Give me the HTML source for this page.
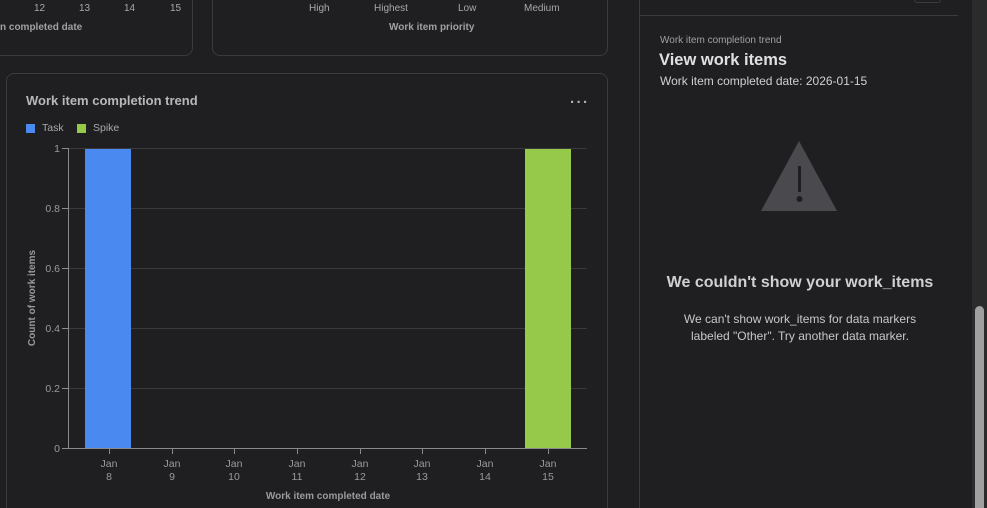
<!DOCTYPE html>
<html style="margin:0;width:987px;height:508px;overflow:hidden"><head><meta charset="utf-8"><style>
body{margin:0;width:987px;height:508px;overflow:hidden;background:#1f1f21;font-family:"Liberation Sans",sans-serif;position:relative}
.abs{position:absolute}
.card{position:absolute;border:1px solid #3b3b3e;border-radius:8px;box-sizing:border-box}
.t{position:absolute;color:#a8a8aa;font-size:10px;white-space:nowrap}
</style></head><body>
<div class="card" style="left:-20px;top:-20px;width:213px;height:76px"></div>
<div class="card" style="left:212px;top:-20px;width:396px;height:76px"></div>
<div class="t" style="left:34px;top:3px">12</div>
<div class="t" style="left:79px;top:3px">13</div>
<div class="t" style="left:124px;top:3px">14</div>
<div class="t" style="left:170px;top:3px">15</div>
<div class="t" style="left:0;top:22px;font-weight:bold;font-size:10px;color:#a0a0a2">n completed date</div>
<div class="t" style="left:309px;top:3px">High</div>
<div class="t" style="left:374px;top:3px">Highest</div>
<div class="t" style="left:458px;top:3px">Low</div>
<div class="t" style="left:524px;top:3px">Medium</div>
<div class="t" style="left:389px;top:22px;font-weight:bold;font-size:10px;color:#a0a0a2">Work item priority</div>

<div class="card" style="left:6px;top:73px;width:602px;height:445px"></div>
<div class="t" style="left:26px;top:93px;font-size:13px;font-weight:bold;color:#b8b8ba">Work item completion trend</div>
<div class="t" style="left:570px;top:94px;font-size:15px;font-weight:bold;color:#b0b0b2;letter-spacing:1.5px">···</div>
<div class="abs" style="left:26px;top:124px;width:9px;height:9px;background:#4a8af0"></div>
<div class="t" style="left:42px;top:122px;font-size:10.5px">Task</div>
<div class="abs" style="left:77px;top:124px;width:9px;height:9px;background:#96c84a"></div>
<div class="t" style="left:93px;top:122px;font-size:10.5px">Spike</div>

<svg class="abs" style="left:0;top:0" width="640" height="508">
<g stroke="#3a3a3d" stroke-width="1">
<line x1="69" y1="148.5" x2="587" y2="148.5"/><line x1="69" y1="208.5" x2="587" y2="208.5"/>
<line x1="69" y1="268.5" x2="587" y2="268.5"/><line x1="69" y1="328.5" x2="587" y2="328.5"/>
<line x1="69" y1="388.5" x2="587" y2="388.5"/></g>
<rect x="85" y="149" width="46" height="299" fill="#4a8af0"/>
<rect x="525" y="149" width="46" height="299" fill="#96c84a"/>
<g stroke="#8a8a8c" stroke-width="1">
<line x1="68.5" y1="148" x2="68.5" y2="448"/><line x1="62" y1="448.5" x2="587" y2="448.5"/>
<line x1="62" y1="148.5" x2="68" y2="148.5"/><line x1="62" y1="208.5" x2="68" y2="208.5"/>
<line x1="62" y1="268.5" x2="68" y2="268.5"/><line x1="62" y1="328.5" x2="68" y2="328.5"/>
<line x1="62" y1="388.5" x2="68" y2="388.5"/>
<line x1="109.5" y1="448" x2="109.5" y2="454"/><line x1="172.5" y1="448" x2="172.5" y2="454"/>
<line x1="234.5" y1="448" x2="234.5" y2="454"/><line x1="297.5" y1="448" x2="297.5" y2="454"/>
<line x1="360.5" y1="448" x2="360.5" y2="454"/><line x1="422.5" y1="448" x2="422.5" y2="454"/>
<line x1="485.5" y1="448" x2="485.5" y2="454"/><line x1="548.5" y1="448" x2="548.5" y2="454"/>
</g>
<g fill="#9a9a9c" font-family="Liberation Sans" font-size="10.5" text-anchor="end">
<text x="60" y="152">1</text><text x="60" y="212">0.8</text><text x="60" y="272">0.6</text>
<text x="60" y="332">0.4</text><text x="60" y="392">0.2</text><text x="60" y="452">0</text></g>
<g fill="#9a9a9c" font-family="Liberation Sans" font-size="10.5" text-anchor="middle">
<text x="109" y="467">Jan</text><text x="109" y="480">8</text>
<text x="172" y="467">Jan</text><text x="172" y="480">9</text>
<text x="234" y="467">Jan</text><text x="234" y="480">10</text>
<text x="297" y="467">Jan</text><text x="297" y="480">11</text>
<text x="360" y="467">Jan</text><text x="360" y="480">12</text>
<text x="422" y="467">Jan</text><text x="422" y="480">13</text>
<text x="485" y="467">Jan</text><text x="485" y="480">14</text>
<text x="548" y="467">Jan</text><text x="548" y="480">15</text>
<text x="328" y="499" font-weight="bold" font-size="10">Work item completed date</text>
<text transform="translate(35,298) rotate(-90)" font-weight="bold" font-size="10">Count of work items</text>
</g>
</svg>

<div class="abs" style="left:639px;top:0;width:1px;height:508px;background:#3b3b3e"></div>
<div class="abs" style="left:639px;top:15px;width:319px;height:1px;background:#3b3b3e"></div>
<div class="abs" style="left:914px;top:-10px;width:25px;height:11px;border:1px solid #3b3b3e;border-radius:3px"></div>
<div class="abs" style="left:972px;top:0;width:15px;height:508px;background:#2b2b2c"></div>
<div class="abs" style="left:975px;top:306px;width:9px;height:210px;background:#a0a0a0;border-radius:5px"></div>
<div class="t" style="left:660px;top:35px;font-size:10px;color:#a0a0a2">Work item completion trend</div>
<div class="t" style="left:659px;top:51px;font-size:16.5px;font-weight:bold;color:#e0e0e2">View work items</div>
<div class="t" style="left:660px;top:74px;font-size:12px;color:#d0d0d2">Work item completed date: 2026-01-15</div>
<svg class="abs" style="left:740px;top:130px" width="120" height="90">
<polygon points="59,11 97,81 21,81" fill="#4a4a4e"/>
<rect x="58" y="36" width="3" height="26" fill="#1f1f21"/><circle cx="59.5" cy="69" r="3" fill="#1f1f21"/>
</svg>
<div class="t" style="left:634px;top:274px;width:332px;text-align:center;font-size:16px;font-weight:bold;color:#d0d0d2">We couldn't show your work_items</div>
<div class="t" style="left:634px;top:311px;width:332px;text-align:center;font-size:12px;line-height:17px;color:#c8c8ca;white-space:normal">We can't show work_items for data markers<br>labeled "Other". Try another data marker.</div>
</body></html>
